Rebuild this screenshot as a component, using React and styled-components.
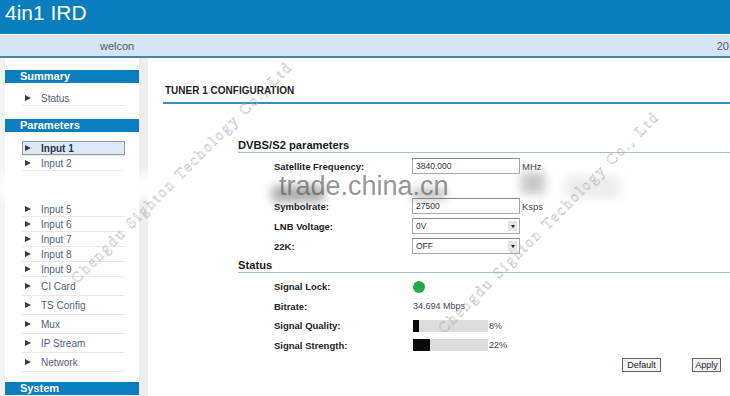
import styled, { createGlobalStyle } from "styled-components";

const GlobalStyle = createGlobalStyle`
  html, body {
    margin: 0;
    padding: 0;
    background: #fff;
  }
  body {
    font-family: "Liberation Sans", Arial, sans-serif;
  }
`;

const summaryItems = [{ label: "Status" }];

const paramItems = [
  { label: "Input 1", active: true },
  { label: "Input 2" },
  { gap: true },
  { label: "Input 5" },
  { label: "Input 6" },
  { label: "Input 7" },
  { label: "Input 8" },
  { label: "Input 9" },
  { label: "CI Card", tall: true },
  { label: "TS Config", tall: true },
  { label: "Mux", tall: true },
  { label: "IP Stream", tall: true },
  { label: "Network", tall: true },
];

const NavList = ({ items, top }) =>
  items.map((it, i) =>
    it.gap ? (
      <NavGap key={i} />
    ) : (
      <NavItem key={i} $top={i === 0 ? top : 0} $active={it.active} $tall={it.tall}>
        <Arrow />
        <span>{it.label}</span>
      </NavItem>
    )
  );

const App = () => {
  return (
    <Page>
      <GlobalStyle />
      <Header>4in1 IRD</Header>
      <WelcomeBar>
        <span>welcon</span>
        <span>20</span>
      </WelcomeBar>
      <Body>
        <Sidebar>
          <SideInner>
            <SectionHeader>Summary</SectionHeader>
            <NavList items={summaryItems} top={8} />
            <SectionHeader $space={13}>Parameters</SectionHeader>
            <NavList items={paramItems} top={9} />
            <SectionHeader $space={10}>System</SectionHeader>
          </SideInner>
        </Sidebar>
        <Content>
          <Title>TUNER 1 CONFIGURATION</Title>
          <Section $top={34}>
            <SubHeader>DVBS/S2 parameters</SubHeader>
            <FormGrid>
              <Label>Satellite Frequency:</Label>
              <Value>
                <TextBox>3840.000</TextBox>
                <Unit>MHz</Unit>
              </Value>
              <Label />
              <Value />
              <Label>Symbolrate:</Label>
              <Value>
                <TextBox>27500</TextBox>
                <Unit>Ksps</Unit>
              </Value>
              <Label>LNB Voltage:</Label>
              <Value>
                <SelectBox>
                  <span>0V</span>
                  <SelectArrow />
                </SelectBox>
              </Value>
              <Label>22K:</Label>
              <Value>
                <SelectBox>
                  <span>OFF</span>
                  <SelectArrow />
                </SelectBox>
              </Value>
            </FormGrid>
          </Section>
          <Section $top={2}>
            <SubHeader>Status</SubHeader>
            <StatusGrid>
              <Label>Signal Lock:</Label>
              <Value>
                <LockDot />
              </Value>
              <Label>Bitrate:</Label>
              <Value>
                <Reading>34.694 Mbps</Reading>
              </Value>
              <Label>Signal Quality:</Label>
              <Value>
                <Bar>
                  <BarFill style={{ width: "8%" }} />
                </Bar>
                <Reading>8%</Reading>
              </Value>
              <Label>Signal Strength:</Label>
              <Value>
                <Bar>
                  <BarFill style={{ width: "22%" }} />
                </Bar>
                <Reading>22%</Reading>
              </Value>
            </StatusGrid>
            <ButtonRow>
              <Button $w={39}>Default</Button>
              <Button $w={29}>Apply</Button>
            </ButtonRow>
          </Section>
        </Content>
      </Body>

      <Smudge $x={0} $y={174} $w={200} $h={25} $c="rgba(255,255,255,0.95)" />
      <Smudge $x={272} $y={186} $w={52} $h={16} $c="rgba(90,90,90,0.5)" />
      <Smudge $x={412} $y={188} $w={34} $h={12} $c="rgba(110,110,110,0.4)" />
      <Smudge $x={521} $y={172} $w={24} $h={22} $c="rgba(120,120,120,0.4)" />
      <Smudge $x={565} $y={176} $w={55} $h={22} $c="rgba(220,220,220,0.55)" />

      <TradeMark>trade.china.cn</TradeMark>
      <Watermark $x={79} $y={284}>Chengdu Sighton Techology Co., Ltd</Watermark>
      <Watermark $x={446} $y={334}>Chengdu Sighton Techology Co., Ltd</Watermark>
    </Page>
  );
};

export default App;

const Page = styled.div`
  position: relative;
  width: 730px;
  height: 396px;
  overflow: hidden;
  background: #fff;
`;

const Header = styled.div`
  height: 34px;
  background: #0a7ebd;
  color: #fff;
  font-size: 21px;
  line-height: 26px;
  padding-left: 5px;
`;

const WelcomeBar = styled.div`
  height: 21px;
  margin-top: 1px;
  background: #d3e4f2;
  border-bottom: 2px solid #4a82a8;
  display: flex;
  justify-content: space-between;
  align-items: center;
  padding: 0 1px 0 100px;
  font-size: 11px;
  color: #5a5a5a;
`;

const Body = styled.div`
  display: flex;
  height: 338px;
`;

const Sidebar = styled.div`
  width: 148px;
  flex-shrink: 0;
  background: linear-gradient(to right, #f4f4f4 0, #f4f4f4 5px, #fff 5px, #fff 139px, #eeeeee 139px);
`;

const SideInner = styled.div`
  margin-left: 5px;
  width: 134px;
  padding-top: 12px;
`;

const SectionHeader = styled.div`
  margin-top: ${(p) => p.$space || 0}px;
  height: 13px;
  line-height: 13px;
  background: #0b7ec0;
  color: #fff;
  font-weight: bold;
  font-size: 11px;
  padding-left: 15px;
`;

const NavItem = styled.div`
  display: flex;
  align-items: center;
  height: ${(p) => (p.$tall ? 18 : 14)}px;
  margin: ${(p) => p.$top}px 14px 0 17px;
  padding-left: 3px;
  border-bottom: 1px solid #e8e8e8;
  font-size: 10px;
  color: ${(p) => (p.$active ? "#24324a" : "#51607a")};
  font-weight: ${(p) => (p.$active ? "bold" : "normal")};
  background: ${(p) => (p.$active ? "#dce9f6" : "transparent")};
  box-shadow: ${(p) => (p.$active ? "inset 0 0 0 1px #9a9a9a" : "none")};
  > span {
    margin-left: 10px;
  }
`;

const NavGap = styled.div`
  height: 31px;
`;

const Arrow = styled.i`
  width: 0;
  height: 0;
  border-top: 3.5px solid transparent;
  border-bottom: 3.5px solid transparent;
  border-left: 6px solid #3c3c3c;
`;

const Content = styled.div`
  flex: 1;
  padding-left: 15px;
`;

const Title = styled.div`
  margin-top: 26px;
  padding: 0 0 4px 2px;
  border-bottom: 2px solid #3a8cc2;
  font-size: 10px;
  line-height: 14px;
  font-weight: bold;
  color: #1e1e1e;
`;

const Section = styled.div`
  margin: ${(p) => p.$top}px 0 0 75px;
`;

const SubHeader = styled.div`
  font-size: 11.2px;
  font-weight: bold;
  line-height: 14px;
  color: #1a1a1a;
  border-bottom: 1px solid #9cc0d2;
`;

const FormGrid = styled.div`
  margin-top: 3px;
  padding-left: 36px;
  display: grid;
  grid-template-columns: 138px 1fr;
  grid-auto-rows: 20px;
  align-items: center;
`;

const StatusGrid = styled(FormGrid)`
  margin-top: 4px;
  grid-auto-rows: 19.5px;
`;

const Label = styled.div`
  font-size: 9.5px;
  font-weight: bold;
  color: #222;
`;

const Value = styled.div`
  display: flex;
  align-items: center;
`;

const TextBox = styled.div`
  width: 103px;
  height: 14px;
  line-height: 14px;
  padding-left: 3px;
  border: 1px solid #a9a9a9;
  border-top-color: #8a8a8a;
  font-size: 8.5px;
  color: #333;
  background: #fff;
`;

const SelectBox = styled(TextBox)`
  display: flex;
  align-items: center;
  justify-content: space-between;
  padding-right: 2px;
  width: 101px;
`;

const SelectArrow = styled.i`
  width: 9px;
  height: 10px;
  background: #e4e4e4;
  display: flex;
  align-items: center;
  justify-content: center;
  &::after {
    content: "";
    border-left: 2.5px solid transparent;
    border-right: 2.5px solid transparent;
    border-top: 3px solid #222;
  }
`;

const Unit = styled.span`
  margin-left: 2px;
  font-size: 9.5px;
  color: #444;
`;

const LockDot = styled.div`
  margin-left: 1px;
  width: 12px;
  height: 12px;
  border-radius: 50%;
  background: #22ab48;
`;

const Reading = styled.span`
  margin-left: 1px;
  font-size: 9px;
  color: #4a4455;
`;

const Bar = styled.div`
  width: 75px;
  height: 12px;
  margin-left: 1px;
  background: #dcdcdc;
`;

const BarFill = styled.div`
  height: 100%;
  background: #0a0a0a;
`;

const ButtonRow = styled.div`
  margin-top: 3px;
  display: flex;
  justify-content: flex-end;
  gap: 31px;
  padding-right: 9px;
`;

const Button = styled.div`
  box-sizing: border-box;
  width: ${(p) => p.$w}px;
  height: 14px;
  line-height: 12px;
  text-align: center;
  border: 1px solid #5c6070;
  background: #f4f4f4;
  font-size: 9px;
  color: #222;
`;

const Smudge = styled.div`
  position: absolute;
  left: ${(p) => p.$x}px;
  top: ${(p) => p.$y}px;
  width: ${(p) => p.$w}px;
  height: ${(p) => p.$h}px;
  background: ${(p) => p.$c};
  filter: blur(5px);
  pointer-events: none;
`;

const TradeMark = styled.div`
  position: absolute;
  left: 279px;
  top: 171px;
  font-size: 27px;
  line-height: 30px;
  color: rgba(80, 80, 80, 0.62);
  pointer-events: none;
`;

const Watermark = styled.div`
  position: absolute;
  left: ${(p) => p.$x}px;
  top: ${(p) => p.$y - 14}px;
  font-family: "Liberation Serif", "Times New Roman", serif;
  font-size: 15px;
  line-height: 16px;
  letter-spacing: 2.4px;
  white-space: nowrap;
  color: transparent;
  -webkit-text-stroke: 0.4px #b0b0b0;
  transform-origin: 0 100%;
  transform: rotate(-45deg);
  pointer-events: none;
`;
